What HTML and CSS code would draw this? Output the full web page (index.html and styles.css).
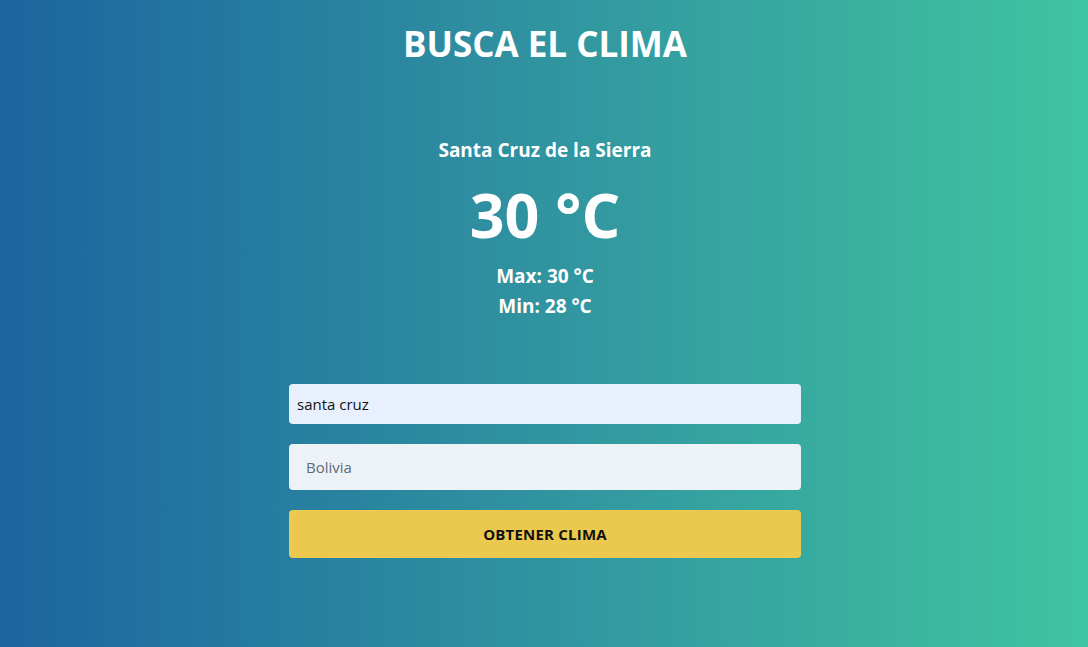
FILE: index.html
```html
<!DOCTYPE html>
<html lang="es">
<head>
<meta charset="utf-8">
<title>Busca el clima</title>
<link rel="stylesheet" href="styles.css">
</head>
<body>
<main class="app">
  <h1 class="title">BUSCA EL CLIMA</h1>
  <section class="weather">
    <h2 class="city">Santa Cruz de la Sierra</h2>
    <p class="temp">30 °C</p>
    <p class="range range-max">Max: 30 °C</p>
    <p class="range">Min: 28 °C</p>
  </section>
  <form class="form">
    <input class="field field-city" type="text" value="santa cruz">
    <input class="field field-country" type="text" placeholder="Bolivia">
    <button class="btn" type="button">OBTENER CLIMA</button>
  </form>
</main>
</body>
</html>
```
FILE: styles.css
```css
* { box-sizing: border-box; }
html, body { height: 100%; }
body {
  margin: 0;
  font-family: "Open Sans", "Noto Sans", sans-serif;
  background: linear-gradient(to right, #1b659f 0%, #2f8fa0 45%, #40c4a0 100%);
  color: #fff;
}
.app {
  display: flex;
  flex-direction: column;
  align-items: center;
  padding-left: 2px;
}
.title {
  margin: 23px 0 0;
  font-size: 35px;
  line-height: 42px;
  font-weight: 700;
}
.weather {
  margin-top: 72px;
  display: flex;
  flex-direction: column;
  align-items: center;
}
.city {
  margin: 0;
  font-size: 19px;
  line-height: 26px;
  font-weight: 700;
}
.temp {
  margin: 19px 0 0;
  font-size: 61px;
  line-height: 66px;
  font-weight: 700;
}
.range {
  margin: 0;
  font-size: 19px;
  line-height: 30px;
  font-weight: 700;
}
.range-max { margin-top: 13px; }
.form {
  margin-top: 63px;
  width: 512px;
  display: flex;
  flex-direction: column;
  gap: 20px;
}
.field {
  width: 100%;
  border: none;
  border-radius: 4px;
  font-family: inherit;
  font-size: 15px;
  color: #111;
  outline: none;
}
.field-city {
  height: 40px;
  padding: 0 8px;
  background: #e8f0fe;
}
.field-country {
  height: 46px;
  padding: 0 17px;
  background: #edf2f7;
}
.field-country::placeholder { color: #5f6b7a; }
.btn {
  height: 48px;
  border: none;
  border-radius: 4px;
  background: #ebc94e;
  color: #111;
  font-family: inherit;
  font-size: 15px;
  font-weight: 700;
  letter-spacing: 0.2px;
}
```
